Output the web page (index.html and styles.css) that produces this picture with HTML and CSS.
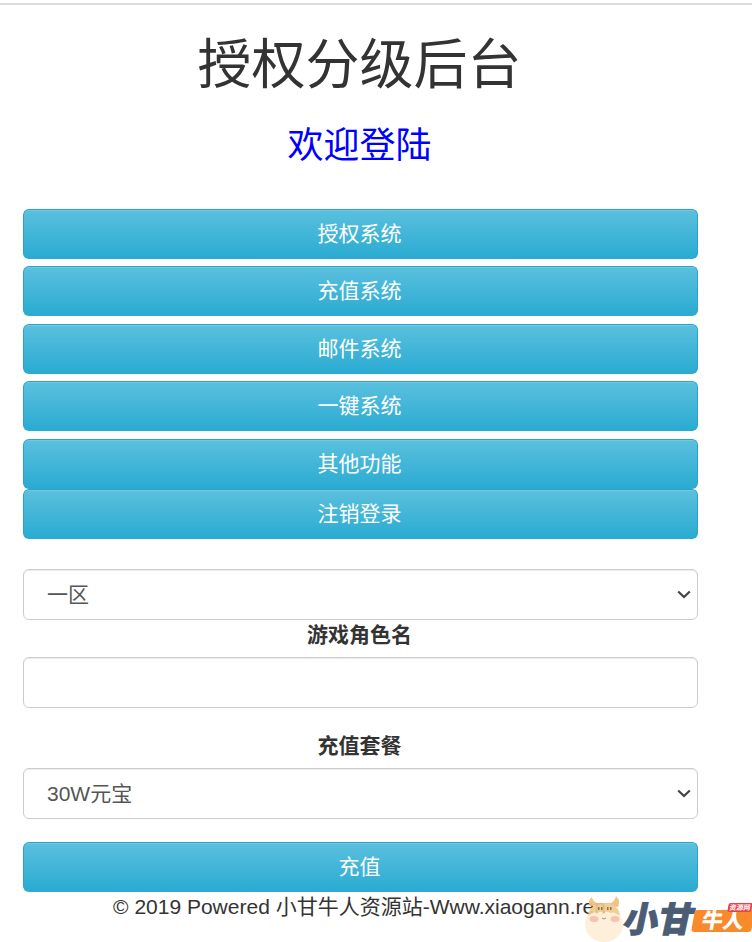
FILE: index.html
```html
<!DOCTYPE html>
<html lang="zh-CN">
<head>
<meta charset="utf-8">
<title>授权分级后台</title>
<link rel="stylesheet" href="styles.css">
</head>
<body>
<div class="topline"></div>
<main class="page">
  <h1 class="title">授权分级后台</h1>
  <h2 class="subtitle">欢迎登陆</h2>
  <div class="menu">
    <button class="btn">授权系统</button>
    <button class="btn">充值系统</button>
    <button class="btn">邮件系统</button>
    <button class="btn">一键系统</button>
    <div class="pair">
      <button class="btn">其他功能</button>
      <button class="btn">注销登录</button>
    </div>
  </div>
  <form class="form">
    <select class="control control-select">
      <option>一区</option>
    </select>
    <label class="label label-role">游戏角色名</label>
    <input class="control" type="text">
    <label class="label label-pack">充值套餐</label>
    <select class="control control-select">
      <option>30W元宝</option>
    </select>
    <button class="btn btn-submit" type="button">充值</button>
  </form>
  <p class="footer">© 2019 Powered 小甘牛人资源站-Www.xiaogann.ren</p>
</main>
<div class="logo">
  <svg class="logo-cow" width="42" height="47" viewBox="0 0 42 47">
    <path d="M6 11 Q3 6 8 2 Q9 7 13 8 L27 8 Q31 6 32 1 Q37 6 34 12Z" fill="#f0bf7c"/>
    <ellipse cx="20" cy="30" rx="19" ry="17" fill="#fdeed6"/>
    <path d="M4 21 Q5 9 20 8 Q35 9 36 21 Q30 16 26 18 Q22 15 20 19 Q17 15 14 18 Q9 16 4 21Z" fill="#f3c98c"/>
    <ellipse cx="10" cy="24" rx="4.5" ry="3" fill="#f8bcaa"/>
    <ellipse cx="31" cy="24" rx="4.5" ry="3" fill="#f8bcaa"/>
    <rect x="14" y="12" width="1.5" height="3" fill="#7a6a50"/>
    <rect x="17" y="12" width="1.5" height="3" fill="#7a6a50"/>
    <rect x="23" y="12" width="1.5" height="3" fill="#7a6a50"/>
    <rect x="26" y="12" width="1.5" height="3" fill="#7a6a50"/>
    <path d="M18 23 Q20 25 22 23" fill="none" stroke="#a58a68" stroke-width="1"/>
  </svg>
  <span class="logo-main">小甘</span>
  <span class="logo-tag">牛人</span>
  <span class="logo-mini">资源网</span>
</div>
</body>
</html>
```
FILE: styles.css
```css
html, body {
  margin: 0;
  padding: 0;
  height: 942px;
  overflow: hidden;
  background: #fff;
}
body {
  font-family: "Liberation Sans", "Noto Sans CJK SC", sans-serif;
  font-size: 21px;
  line-height: 1.43;
  color: #333;
  position: relative;
}
.topline {
  margin-top: 3px;
  height: 2px;
  background: #ddd;
}
.page {
  width: 675px;
  margin-left: 23px;
  text-align: center;
}
.title {
  margin: 22px 0 0;
  padding-right: 2px;
  font-size: 54px;
  line-height: 76px;
  font-weight: 400;
}
.subtitle {
  margin: 18px 0 0;
  padding-right: 2px;
  font-size: 36px;
  line-height: 50px;
  font-weight: 400;
  color: #00f;
}
.menu {
  margin-top: 37.9px;
  display: flex;
  flex-direction: column;
  gap: 7.5px;
}
.pair {
  display: flex;
  flex-direction: column;
}
.btn {
  display: block;
  width: 100%;
  height: 50px;
  padding: 0 2px 4px 0;
  font-family: inherit;
  font-size: 21px;
  color: #fff;
  background: linear-gradient(to bottom, #5bc0de 0%, #2aabd2 100%);
  border: 1px solid #28a4c9;
  border-bottom-color: #2aabd2;
  border-radius: 6px;
  box-shadow: inset 0 1px 0 rgba(255, 255, 255, .15);
}
.form {
  margin-top: 30px;
  display: flex;
  flex-direction: column;
}
.control {
  display: block;
  box-sizing: border-box;
  width: 100%;
  height: 51px;
  padding: 0 19px;
  font-family: inherit;
  font-size: 21px;
  color: #555;
  background-color: #fff;
  border: 1px solid #ccc;
  border-radius: 6px;
  box-shadow: inset 0 1px 1px rgba(0, 0, 0, .075);
}
.control-select {
  appearance: none;
  -webkit-appearance: none;
  padding-left: 23px;
  background-image: url("data:image/svg+xml,%3Csvg xmlns='http://www.w3.org/2000/svg' width='14' height='9' viewBox='0 0 14 9'%3E%3Cpath d='M1.2 1.5 L7 7 L12.8 1.5' fill='none' stroke='%23444' stroke-width='2.2'/%3E%3C/svg%3E");
  background-repeat: no-repeat;
  background-position: right 6px center;
}
.label {
  display: block;
  padding-right: 2px;
  font-weight: 700;
  line-height: 30px;
}
.label-role {
  margin-top: 0;
  margin-bottom: 7px;
}
.label-pack {
  margin-top: 23px;
  margin-bottom: 7px;
}
.btn-submit {
  margin-top: 23px;
}
.footer {
  margin: 0;
  padding-right: 2px;
  line-height: 30px;
}
.logo {
  position: absolute;
  left: 583px;
  top: 895px;
  width: 169px;
  height: 47px;
}
.logo-cow {
  position: absolute;
  left: 1px;
  top: 0;
  opacity: .92;
}
.logo-main {
  position: absolute;
  left: 41px;
  top: 2px;
  font-size: 35px;
  line-height: 46px;
  font-weight: 900;
  transform: skewX(-12deg);
  -webkit-text-stroke: 1px #4a5d74;
  color: #4a5d74;
}
.logo-tag {
  position: absolute;
  left: 110px;
  top: 15px;
  width: 60px;
  height: 22px;
  border-radius: 3px;
  transform: skewX(-10deg);
  background: #f98a2c;
  color: #fff;
  font-size: 21px;
  line-height: 22px;
  font-weight: 900;
  text-align: center;
}
.logo-mini {
  position: absolute;
  left: 145px;
  top: 8px;
  width: 24px;
  height: 9px;
  transform: skewX(-10deg);
  background: #e8404a;
  border-radius: 2px;
  color: #fff;
  font-size: 7px;
  line-height: 9px;
  text-align: center;
  font-weight: 700;
}
```
